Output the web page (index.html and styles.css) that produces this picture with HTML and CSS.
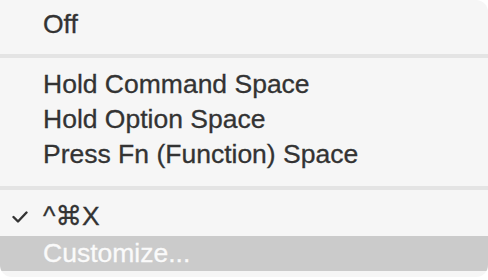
FILE: index.html
```html
<!DOCTYPE html>
<html>
<head>
<meta charset="utf-8">
<link rel="stylesheet" href="styles.css">
</head>
<body>
<div class="menu">
  <div class="item first"><span class="mark"></span><span class="label">Off</span></div>
  <div class="sep"><div class="line"></div></div>
  <div class="item"><span class="mark"></span><span class="label">Hold Command Space</span></div>
  <div class="item"><span class="mark"></span><span class="label">Hold Option Space</span></div>
  <div class="item"><span class="mark"></span><span class="label">Press Fn (Function) Space</span></div>
  <div class="sep sep2"><div class="line"></div></div>
  <div class="item"><span class="mark"><svg width="16" height="12" viewBox="0 0 16 12"><polyline points="1.5,6 6,10.5 14.5,1.5" fill="none" stroke="#333" stroke-width="2.4" stroke-linecap="round" stroke-linejoin="round"/></svg></span><span class="label">^⌘X</span></div>
  <div class="item active"><span class="mark"></span><span class="label">Customize...</span></div>
</div>
</body>
</html>
```

FILE: styles.css
```css
html, body {
  margin: 0;
  padding: 0;
  background: #ffffff;
}
.menu {
  width: 488px;
  height: 277px;
  box-sizing: border-box;
  background: #f6f6f6;
  border-radius: 0 12px 12px 12px;
  padding-top: 7px;
  display: flex;
  flex-direction: column;
  font-family: "Liberation Sans", "DejaVu Sans", sans-serif;
  font-size: 26.5px;
  color: #333333;
  -webkit-text-stroke: 0.3px currentColor;
  overflow: hidden;
}
.item {
  height: 35px;
  display: flex;
  align-items: center;
  flex-shrink: 0;
}
.mark {
  width: 43px;
  flex-shrink: 0;
  display: flex;
  justify-content: flex-start;
  padding-left: 12px;
  box-sizing: border-box;
}
.mark svg {
  display: block;
}
.label {
  white-space: nowrap;
  line-height: 35px;
}
.sep {
  height: 25px;
  flex-shrink: 0;
  display: flex;
  flex-direction: column;
  padding-top: 12px;
  box-sizing: border-box;
}
.sep2 {
  height: 27px;
  padding-top: 14px;
}
.line {
  height: 4px;
  background: #e4e4e4;
}
.active {
  background: #cbcbcb;
  color: #fafafa;
  margin-top: 2px;
}
```
